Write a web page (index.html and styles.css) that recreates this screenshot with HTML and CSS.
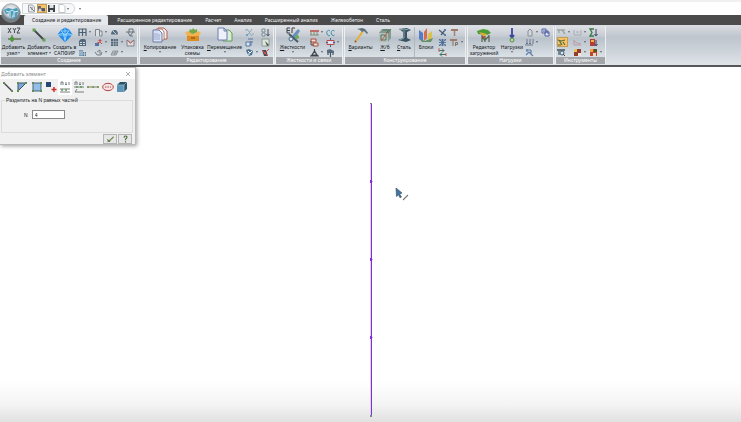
FILE: index.html
```html
<!DOCTYPE html>
<html lang="ru">
<head>
<meta charset="utf-8">
<title>Добавить элемент</title>
<link rel="stylesheet" href="styles.css">
</head>
<body>
<header class="titlebar">
  <button class="orb" aria-label="Меню приложения">
    <svg viewBox="0 0 20 20"><defs><radialGradient id="orb" cx=".5" cy=".35"><stop offset="0" stop-color="#fff"/><stop offset=".7" stop-color="#c3cbd1"/><stop offset="1" stop-color="#747c84"/></radialGradient></defs><circle cx="10" cy="10" r="9.3" fill="url(#orb)" stroke="#888f96" stroke-width=".7"/><path d="M3 7l4-2 5 1 4-1 2 3-2 3v3l-3 2-1-5-2 5-2-1V10l-3 1z" fill="#4b9dbb"/><path d="M5 8l3 1 3-2 3 2 3-1M9 9v6M13 9v5" stroke="#d9f0f6" fill="none"/></svg>
  </button>
  <nav class="quick" aria-label="Быстрый доступ">
    <button aria-label="Просмотр"><svg viewBox="0 0 9 9"><path d="M1.500 1h4l2 2v5h-6z" fill="#e8eaec" stroke="#8b9299" stroke-width=".8"/><path d="M3 3l4 4M5 3v3" stroke="#78828b"/></svg></button>
    <button class="is-on" aria-label="Открыть"><svg viewBox="0 0 9 9"><path d="M1 2h3v2h4v3H1z" fill="#6d6675"/><circle cx="3" cy="6" r="1.500" fill="#d9d4dc"/><circle cx="6.500" cy="6" r="1.500" fill="#514e66"/></svg></button>
    <button aria-label="Сохранить"><svg viewBox="0 0 9 9"><path d="M1 1h7v7H1z" fill="#3d4247"/><path d="M2.500 1h4v3h-4zM3 6h3v2H3z" fill="#dfe3e6"/></svg></button>
    <button class="has-menu" aria-label="Создать"><svg viewBox="0 0 9 9"><path d="M2 .5h4l2 2v6H2z" fill="#fff" stroke="#a9afb5" stroke-width=".7"/></svg></button>
  </nav>
  <button class="customize has-menu" aria-label="Настроить панель"></button>
</header>

<nav class="tabs">
  <a class="tab is-active" href="#">Создание и редактирование</a>
  <a class="tab" href="#">Расширенное редактирование</a>
  <a class="tab" href="#">Расчет</a>
  <a class="tab" href="#">Анализ</a>
  <a class="tab" href="#">Расширенный анализ</a>
  <a class="tab" href="#">Железобетон</a>
  <a class="tab" href="#">Сталь</a>
</nav>

<div class="ribbon">
  <section class="group group-create">
    <div class="tools">
      <button class="big"><svg viewBox="0 0 16 16"><path d="M2 1l3 5M5 1L2 6M7 1l1.500 2.500L10 1M8.500 3.500V6M11 1h3l-3 5h3" stroke="#343a40" stroke-width=".9" fill="none"/><path d="M2 12h13M6 8v7" stroke="#6b745e" stroke-width="1.300"/><circle cx="6" cy="12" r="2.200" fill="#4a9b34"/></svg><span>Добавить<br><span class="menu-text">узел</span></span></button>
      <button class="big"><svg viewBox="0 0 16 16"><path d="M3 3l10 10" stroke="#3f4648" stroke-width="1.800"/><path d="M1.500 1.500h3v3h-3zM11.500 11.500h3v3h-3z" fill="#64a253"/></svg><span>Добавить<br><span class="menu-text">элемент</span></span></button>
      <button class="big"><svg viewBox="0 0 16 16"><path d="M8 .5l4 2 3.500 5L8 15.500.5 7.500 4 3z" fill="#2389e6"/><path d="M4 4h8M1 8h14M8 1v14M4 4l4 4 4-4M1 8l5-2 2 7 2-7 5 2" stroke="#9cdbff" stroke-width=".8" fill="none"/></svg><span>Создать в<br>САПФИР</span></button>
      <div class="smalls">
        <button class="has-menu" aria-label="Рама"><svg viewBox="0 0 9 9"><path d="M1 8V1h7v7M1 4.500h7M4.500 1v7" stroke="#4c6073" fill="none" stroke-width="1.200"/></svg></button>
        <button class="has-menu" aria-label="Стена"><svg viewBox="0 0 9 9"><path d="M1.500 8V1.500h4V8M6 3h2v5H6" stroke="#7c868e" fill="#dce0e4"/></svg></button>
        <button aria-label="Купол"><svg viewBox="0 0 9 9"><path d="M1 7C1 3 3 2 5 2s3 2 3 5z" fill="#586c7b"/><path d="M1 7h7M3 3l3 3" stroke="#bed0db"/></svg></button>
        <button aria-label="Ферма"><svg viewBox="0 0 9 9"><path d="M0 4h9M3 4V1h4v3M2 4l2 4 3-4M4 8h3" stroke="#69727a" fill="none"/></svg></button>
        <button aria-label="Пространственная рама"><svg viewBox="0 0 9 9"><path d="M1 3l2-2h4l1 2v5H1z" fill="#53697c"/><path d="M2 4h2v1H2zM5 4h2v1H5zM2 6h2v1H2zM5 6h2v1H5z" fill="#d5e1e8"/></svg></button>
        <button class="has-menu" aria-label="Вращение"><svg viewBox="0 0 9 9"><path d="M1 5h4v3H1z" fill="#5474a8"/><path d="M6 1v3M4.500 2.500h3M3 5l3-1 2 2" stroke="#c74d43" fill="none"/></svg></button>
        <button class="has-menu" aria-label="Плита"><svg viewBox="0 0 9 9"><path d="M1 1h7v7H1z" fill="#556476"/><path d="M1 3.500h7M1 6h7M3.500 1v7M6 1v7" stroke="#aeb9c4" stroke-width=".7"/></svg></button>
        <button aria-label="Оболочка"><svg viewBox="0 0 9 9"><path d="M1 2v6h7V2L4.500 5z" fill="#e5d8da" stroke="#7e858e"/><path d="M1 2l3.500 3L8 2" stroke="#b86461" fill="none"/></svg></button>
        <button aria-label="Здание"><svg viewBox="0 0 9 9"><path d="M1 2h4v6H1zM5 4h3v4H5z" fill="#577a9a"/><path d="M2 1v7M4 2v6M6.500 4v4M1 4h4M1 6h7" stroke="#cbdbe7" stroke-width=".7"/></svg></button>
        <button class="has-menu" aria-label="Поверхность"><svg viewBox="0 0 9 9"><path d="M1 4l2 3h4l1-3M3 4l3-2v4" stroke="#737c84" fill="none"/></svg></button>
        <button class="has-menu" aria-label="Сетка"><svg viewBox="0 0 9 9"><path d="M1 7l2-4h5L6 7zM4 7l2-4M2 5h5" stroke="#78838c" fill="none" stroke-width=".8"/></svg></button>
      </div>
    </div>
    <h2>Создание</h2>
  </section>

  <section class="group group-edit">
    <div class="tools">
      <button class="big has-menu"><svg viewBox="0 0 16 16"><path d="M6 1h6l3 3v8H6z" fill="#eee" stroke="#b35f55"/><path d="M4 2h6l2 3v8H4z" fill="#fff" stroke="#b77d65"/><path d="M1 3h6l3 3v9H1z" fill="#d8e1f3" stroke="#6d7ba9"/><path d="M3 6v7M5 6v7M7 7v6" stroke="#9ba8cc"/></svg><span><u>К</u>опирование</span></button>
      <button class="big"><svg viewBox="0 0 16 16"><path d="M2 8h12v6H2z" fill="#dc8c21"/><path d="M0 6l3-2 5 3 5-3 3 2-3 3H3z" fill="#f3b24c"/><path d="M4 5l1-3 2 1 1-2 2 2 2-1v3L8 7z" fill="#72a848"/><path d="M6 11h4" stroke="#7d4715"/></svg><span>Упаковка<br>схемы</span></button>
      <button class="big has-menu"><svg viewBox="0 0 16 16"><path d="M6 3h6l3 3v8H6z" fill="#dcecd5" stroke="#5f9d55"/><path d="M1 1h6l3 3v9H1z" fill="#eef1fa" stroke="#6b7fac"/><path d="M7 1v3h3" fill="none" stroke="#6b7fac"/></svg><span><u>П</u>еремещение</span></button>
      <div class="smalls">
        <button aria-label="Разрезать"><svg viewBox="0 0 9 9"><path d="M2 1l5 7M7 1L2 8M0 2h2M7 6h2" stroke="#91a7b8"/><path d="M1 6h2v2H1z" fill="#5cacbd"/></svg></button>
        <button aria-label="Порядок"><svg viewBox="0 0 9 9"><path d="M1 1h3v3H1zM1 5h3v3H1z" stroke="#7e8b94" fill="#dfe4e7"/><path d="M7 1v6M5.500 6L7 8l1.500-2" stroke="#465663" fill="none"/></svg></button>
        <button aria-label="Зеркало"><svg viewBox="0 0 9 9"><path d="M1 4h4v4H1z" fill="#dce4f5" stroke="#5478a4"/><path d="M3 1h5M6 3v5M5 4h3" stroke="#5b76a3"/></svg></button>
        <button aria-label="Выделить"><svg viewBox="0 0 9 9"><path d="M1 1h7v7H1z" fill="#dce6db" stroke="#8e9a91"/><path d="M4 3l4 4-2 1z" fill="#47534e"/></svg></button>
        <button class="has-menu" aria-label="Корректировка"><svg viewBox="0 0 9 9"><path d="M1 2l3-1 4 2-1 4-3 1-2-3z" fill="#4b7194"/><path d="M3 3l2 2 2-2M4 5v2" stroke="#fff" fill="none"/></svg></button>
        <button aria-label="Удалить"><svg viewBox="0 0 9 9"><path d="M1 2h4l2 6H3z" fill="#454c58"/><path d="M8 1L3 6M2 3l5 5" stroke="#d54e43"/></svg></button>
      </div>
    </div>
    <h2>Редактирование</h2>
  </section>

  <section class="group group-stiff">
    <div class="tools">
      <button class="big has-menu"><svg viewBox="0 0 16 16"><path d="M5 1H2v5h3M2 3.500h3M7 1v5M7 1h3" stroke="#3c4347" fill="none"/><path d="M13 2L7 9l2 4 6-9z" fill="#6990bc"/><path d="M4 7l9 8" stroke="#455a6b" stroke-width="2"/><circle cx="6" cy="12" r="2" fill="#d5e5f1" stroke="#506b85"/><circle cx="12" cy="10" r="2" fill="#6da955"/></svg><span><u>Ж</u>есткости</span></button>
      <div class="smalls">
        <button class="has-menu" aria-label="Связи"><svg viewBox="0 0 9 9"><path d="M0 3h9" stroke="#b64d40" stroke-width="1.500"/><path d="M1 4v3M4 4v3M7 4v3M0 7h9" stroke="#6d7c5c" stroke-width=".8"/></svg></button>
        <button aria-label="Шарниры"><svg viewBox="0 0 9 9"><path d="M4 3c-2-2-4 1-3 3s2 2 3 1M8.500 3c-2-2-4 1-3 3s2 2 3 1" stroke="#378bac" fill="none"/></svg></button>
        <button aria-label="Упругое основание"><svg viewBox="0 0 9 9"><path d="M1 1h5v3H1zM3 5h5v3H3z" fill="#eaded8" stroke="#b04d39"/><path d="M1 3v4h3" stroke="#59514d" fill="none"/></svg></button>
        <button class="has-menu" aria-label="Вставки"><svg viewBox="0 0 9 9"><path d="M1 2.500h7v4H1z" fill="#dce2ef" stroke="#b94a4a"/><path d="M4.500 0v2M4.500 7v2M0 4.500h2M7 4.500h2" stroke="#416190"/></svg></button>
        <button class="has-menu" aria-label="Опора"><svg viewBox="0 0 9 9"><path d="M4.500 1v2L2 7h5L4.500 3M0 8h9" fill="none" stroke="#3d454c" stroke-width="1.200"/></svg></button>
        <button aria-label="Сваи"><svg viewBox="0 0 9 9"><path d="M1 4V2l3-1 4 2v2H1z" fill="#596c7f"/><path d="M4.500 4v5M2 5v2M7 5v2" stroke="#485866" stroke-width="1.200"/></svg></button>
      </div>
    </div>
    <h2>Жесткости и связи</h2>
  </section>

  <section class="group group-design">
    <div class="tools">
      <button class="big"><svg viewBox="0 0 16 16"><path d="M10 4L3 14" stroke="#e7ae35" stroke-width="2"/><path d="M4 2l5-1 3 1 3 4-1 1-3-3-2 1-2-2z" fill="#5b7180"/><path d="M3 14l-1 1" stroke="#87552a" stroke-width="2"/></svg><span><u>В</u>арианты</span></button>
      <button class="big"><svg viewBox="0 0 16 16"><path d="M2 6l3-4h9v9l-3 4H2z" fill="#829a90"/><path d="M2 6h9v9H2z" fill="#b4bfbb"/><path d="M4 8h5v5H4zM6 3h6l-3 3M11 6l3-4" stroke="#4f785e" fill="none"/><path d="M4 14l7-9" stroke="#bf5b43"/></svg><span><u>Ж</u>/б</span></button>
      <button class="big"><svg viewBox="0 0 16 16"><path d="M3 2l8-1 4 2-4 2v6l4 2-5 2-8-2 5-2V5z" fill="#3a5361"/><path d="M3 2l5 1 5-1M8 4v7l-4 2" stroke="#88a6b2" fill="none"/></svg><span><u>С</u>таль</span></button>
      <button class="big divided"><svg viewBox="0 0 16 16"><path d="M1 3l4 3v9l-4-3z" fill="#537dc8"/><path d="M6 5l3-4v10l-3 3z" fill="#d96c45"/><path d="M10 7l4-3v8l-4 3z" fill="#d8c14e"/><path d="M2 12l5 2 8-3-2 4H4z" fill="#648f69"/></svg><span>Блоки</span></button>
      <div class="smalls tight">
        <button aria-label="Элементы"><svg viewBox="0 0 9 9"><path d="M1 2l6 5M3 7l4-5" stroke="#4d5e76" stroke-width="1.300"/><path d="M6 1h2v2H6zM6 6h2v2H6z" fill="#577db4"/></svg></button>
        <button aria-label="Балка"><svg viewBox="0 0 9 9"><path d="M1 1h7v2H1z" fill="#a27b67"/><path d="M4.500 3v5" stroke="#99877d" stroke-width="1.500"/></svg></button>
        <button aria-label="Группы"><svg viewBox="0 0 9 9"><path d="M1 1l7 7M8 1L1 8M4.500 1v7M1 4.500h7M1 2h7M1 7h7" stroke="#4a6c96" stroke-width=".9"/></svg></button>
        <button class="has-menu" aria-label="Узел балки"><svg viewBox="0 0 9 9"><path d="M0 1h7v2H0z" fill="#a27b67"/><path d="M3 3v5M5.500 8V4.500h2v2h-2" stroke="#82756c" fill="none"/></svg></button>
        <button aria-label="Расстановка"><svg viewBox="0 0 9 9"><path d="M1 2.500h5M4 .5l2 2-2 2M8 6.500H2M4 4.500l-2 2 2 2" stroke="#3e7661" fill="none"/><path d="M1 0v4M8 5v3" stroke="#c9605a"/></svg></button>
      </div>
    </div>
    <h2>Конструирование</h2>
  </section>

  <section class="group group-loads">
    <div class="tools">
      <button class="big"><svg viewBox="0 0 16 16"><path d="M1 4l6-2 5 1 3 3-4 2-9-1z" fill="#4b9c37"/><path d="M3 5l8 2-3 3z" fill="#e2ad32"/><path d="M6 8v7M9 9v6M13 8v7M6 9l3 5M9 13l4-4" stroke="#546650" stroke-width="1.200"/><path d="M7 9h2v2H7z" fill="#cf5138"/></svg><span>Редактор<br>загружений</span></button>
      <button class="big has-menu"><svg viewBox="0 0 16 16"><path d="M8 1v10M6 8l2 3 2-3" stroke="#3b47a2" stroke-width="1.800" fill="none"/><circle cx="8" cy="13" r="2" fill="#b7d7a7" stroke="#579249"/></svg><span>Нагрузки</span></button>
      <div class="smalls">
        <button class="has-menu" aria-label="Собственный вес"><svg viewBox="0 0 9 9"><path d="M3 8V3l2-2 2 2v5z" fill="#d4d8db" stroke="#858e95"/></svg></button>
        <button aria-label="Копировать нагрузки"><svg viewBox="0 0 9 9"><path d="M1 1h4v4H1zM4 4h4v4H4z" fill="#dce3f4" stroke="#5361a2"/><path d="M2 3h5v3" stroke="#5361a2" fill="none"/></svg></button>
        <button class="has-menu" aria-label="Распределённая нагрузка"><svg viewBox="0 0 9 9"><path d="M2 1v5M5 1v5M8 1v5M0 7h8M1 5l1 1 1-1M4 5l1 1 1-1" stroke="#5b6681" fill="none" stroke-width=".8"/></svg></button>
        <i></i>
        <button aria-label="Изменить нагрузки"><svg viewBox="0 0 9 9"><path d="M1 2h5M2 1v3M6 2v4M1 7l3-3 4 4" stroke="#5f7eaa" fill="none" stroke-width="1.200"/></svg></button>
      </div>
    </div>
    <h2>Нагрузки</h2>
  </section>

  <section class="group group-instr">
    <div class="tools">
      <div class="smalls">
        <button class="has-menu" aria-label="Информация"><svg viewBox="0 0 9 9"><path d="M0 2h8M2 2v3M5 2l3 4" stroke="#9ba6a1" stroke-width="1.300"/></svg></button>
        <button class="has-menu" aria-label="Размеры"><svg viewBox="0 0 9 9"><path d="M1 2v5h7V2M3 4h3" stroke="#a7aeb4" fill="none"/></svg></button>
        <button aria-label="Сумма"><svg viewBox="0 0 9 9"><path d="M5 1H1l2 3.500L1 8h4" stroke="#397841" fill="none" stroke-width="1.300"/><path d="M7 1v6M5.500 6L7 8l1.500-2" stroke="#384970" fill="none"/></svg></button>
        <button class="is-on" aria-label="Фильтр"><svg viewBox="0 0 9 9"><path d="M1 2l3 1 4-1M2 2l3 5M6 4l2 3M1 7h3" stroke="#526b3c" fill="none" stroke-width="1.200"/></svg></button>
        <button class="has-menu" aria-label="Эпюра"><svg viewBox="0 0 9 9"><path d="M1 2v5h7M1 3l3 2 4 1" stroke="#b89ba4" fill="none"/></svg></button>
        <button aria-label="Шкала"><svg viewBox="0 0 9 9"><path d="M1 1h5v7H1z" fill="#b24036"/><path d="M2 2h3v2H2z" fill="#f0b248"/><path d="M7 2v5M6 6l1 2 1.500-2" stroke="#3d456b" fill="none"/></svg></button>
        <button aria-label="Поиск"><svg viewBox="0 0 9 9"><path d="M0 1h8v2H0z" fill="#5e737b"/><circle cx="5" cy="5" r="2" fill="#d9e5ed" stroke="#405d76"/><path d="M6 6l2 2M2 3v4" stroke="#33434f"/></svg></button>
        <button class="has-menu" aria-label="Цвета"><svg viewBox="0 0 9 9"><path d="M1 1h7v7H1z" fill="#943d2d"/><path d="M1 1h3v3H1z" fill="#ecc052"/><path d="M5 5h3v3H5z" fill="#f2e4d7"/></svg></button>
        <button class="has-menu" aria-label="Мозаика"><svg viewBox="0 0 9 9"><path d="M1 1h7v7H1z" fill="#ba492a"/><path d="M1 1h3v3H1z" fill="#efa33d"/><path d="M5 1h3v3H5z" fill="#50562a"/><path d="M4 5h3v3H4z" fill="#e9d6c4"/></svg></button>
      </div>
    </div>
    <h2>Инструменты</h2>
  </section>
</div>

<main class="canvas">
  <svg class="column" viewBox="0 0 4 315" role="img" aria-label="Стержень, 4 элемента"><path d="M1.500 1v312" stroke="#e3ccfb"/><path d="M2.500 1v312" stroke="#7a35cc"/><path d="M1 77h2v3H1zM1 155h2v3H1zM1 233h2v3H1z" fill="#8030e0"/><path d="M3 78h1v1H3zM3 156h1v1H3zM3 234h1v1H3z" fill="#c49af0"/><path d="M1 0h2v1H1zM1 312h2v2H1z" fill="#79898c"/></svg>
  <svg class="cursor" viewBox="0 0 14 15" aria-hidden="true"><path d="M1 1l6 5-2.500 1 2 3-1.500.8-1.500-3L1.500 9.500z" fill="#3f75a2" stroke="#3d5168" stroke-width=".7"/><path d="M8 13l5-5" stroke="#72777c" stroke-width="1.100"/></svg>

  <form class="dialog">
    <div class="dialog-title"><span>Добавить элемент</span><button type="button" aria-label="Закрыть"><svg viewBox="0 0 6 6"><path d="M1 1l4 4M5 1L1 5" stroke="#888" stroke-width=".7"/></svg></button></div>
    <div class="modes">
      <button type="button" aria-label="Стержень"><svg viewBox="0 0 12 12"><path d="M2 2l8 8" stroke="#424b50" stroke-width="1.500"/><path d="M1 1h2v2H1zM9 9h2v2H9z" fill="#5e8e50"/></svg></button>
      <button type="button" aria-label="Треугольник"><svg viewBox="0 0 12 12"><path d="M2 2h8l-8 8z" fill="#7da8d4" stroke="#38546d"/><path d="M1 1h2v2H1zM9 1h2v2H9zM1 9h2v2H1z" fill="#5e8e50"/></svg></button>
      <button type="button" aria-label="Прямоугольник"><svg viewBox="0 0 12 12"><path d="M2 2h8v8H2z" fill="#94bee5" stroke="#426681"/><path d="M1 1h2v2H1zM9 1h2v2H9zM1 9h2v2H1zM9 9h2v2H9z" fill="#5e8e50"/></svg></button>
      <button type="button" aria-label="Добавить по узлам"><svg viewBox="0 0 12 12"><path d="M1 1h5v5H1z" fill="#254676"/><path d="M9 6v5M6.500 8.500h5" stroke="#d12f31" stroke-width="1.500"/></svg></button>
      <button type="button" class="is-on" aria-label="Разделить на N частей"><svg viewBox="0 0 12 12"><path d="M2 4V1h2v3M6 2h2M6 3.500h2M10 1v3M1 8h10M1 11h10" stroke="#667170" fill="none" stroke-width=".9"/><path d="M2 9h2M6 9h2" stroke="#5c9e52" stroke-width="1.300"/></svg></button>
      <button type="button" aria-label="Разделить на расстоянии"><svg viewBox="0 0 12 12"><path d="M2 4V1h2v3M6 2h2M6 3.500h2M10 1v3M1 6h10M4 8l-2 3h9" stroke="#667170" fill="none" stroke-width=".9"/><path d="M3 6h2M7 6h2" stroke="#5c9e52" stroke-width="1.300"/></svg></button>
      <button type="button" aria-label="Цепочка"><svg viewBox="0 0 12 12"><path d="M0 6h12" stroke="#748065"/><path d="M0 5h2v2H0zM5 5h2v2H5zM10 5h2v2h-2z" fill="#8a9c65"/></svg></button>
      <button type="button" aria-label="Контур"><svg viewBox="0 0 12 12"><ellipse cx="6" cy="6" rx="5.300" ry="3.700" fill="#f6e4e3" stroke="#b64548"/><path d="M3 6h6" stroke="#a44e50" stroke-dasharray="1.500 1"/></svg></button>
      <button type="button" aria-label="Объемный элемент"><svg viewBox="0 0 12 12"><path d="M1 4l3-3h7v7l-3 3H1z" fill="#29536b"/><path d="M1 4h7v7H1z" fill="#5d95bb"/><path d="M1 4h7v7M8 4l3-3" stroke="#a8c7c5" fill="none" stroke-width=".7"/></svg></button>
    </div>
    <fieldset>
      <legend>Разделить на N равных частей</legend>
      <label for="parts">N</label><input id="parts" type="text" value="4">
    </fieldset>
    <div class="actions">
      <button type="button" aria-label="Применить"><svg viewBox="0 0 9 9"><path d="M1 5l2 2 5-5" stroke="#718c4c" fill="none" stroke-width="1.300"/><path d="M1 7h3" stroke="#555"/></svg></button>
      <button type="button" aria-label="Справка"><svg viewBox="0 0 9 9"><path d="M3 3c0-3 4-2 3 0L4.500 5v1M4.500 7v1.300" stroke="#4f7043" fill="none" stroke-width="1.300"/></svg></button>
    </div>
  </form>
</main>
</body>
</html>
```
FILE: styles.css
```css
* { box-sizing: border-box; }

body {
  margin: 0;
  min-height: 100vh;
  display: flex;
  flex-direction: column;
  font: 5px/6px "Noto Sans", sans-serif;
  color: #16191c;
  background: #fff;
}

button {
  margin: 0;
  padding: 0;
  border: 0;
  background: none;
  font: inherit;
  color: inherit;
}

svg { display: block; }

/* Title bar */
.titlebar {
  position: relative;
  display: flex;
  align-items: center;
  height: 15px;
  padding-left: 22px;
  border-top: 2px solid #f0f0f0;
}

.orb {
  position: absolute;
  z-index: 1;
  left: 1px;
  top: 1px;
}

.orb svg { width: 20px; height: 20px; }

.quick {
  display: flex;
  align-items: center;
  height: 11px;
  padding: 0 2px 0 4px;
  border: 1px solid #d3d6d9;
  border-radius: 0 5px 5px 0;
  background: #f7f8f9;
}

.quick button { display: flex; align-items: center; width: 10px; height: 9px; }
.quick button.has-menu { width: 15px; gap: 1px; }
.quick svg { width: 9px; height: 9px; }

.customize { display: flex; margin-left: 4px; }

.has-menu::after,
.menu-text::after {
  content: "";
  border: 1px solid transparent;
  border-top: 2px solid #60676e;
  border-bottom: 0;
}

.menu-text::after { display: inline-block; margin-left: 1px; vertical-align: 1px; }

.is-on { background: #f6c365; outline: 1px solid #c79a51; outline-offset: -1px; }

/* Tabs */
.tabs {
  display: flex;
  height: 10px;
  padding-left: 24px;
  background: #4b4b4c;
}

.tab {
  padding: 2px 6px 0 7px;
  color: #f2f2f2;
  text-decoration: none;
  white-space: nowrap;
}

.tab.is-active {
  margin-right: 2px;
  padding: 2px 7px 0 8px;
  border-radius: 2px 2px 0 0;
  background: #e6e8eb;
  color: #17191b;
}

/* Ribbon */
.ribbon {
  display: flex;
  gap: 1px;
  height: 42px;
  padding-top: 1px;
  border-bottom: 2px solid #55585a;
  background: linear-gradient(#dadde2, #bfc5cd 30%, #cdd3da 65%, #dfe4e8);
}

.group {
  display: flex;
  flex-direction: column;
  height: 38px;
  border: 1px solid #eceef0;
  border-width: 0 1px;
  background: linear-gradient(#dfe2e6, #c8cdd4 25%, #b9c1ca 32%, #d9e0e5 80%);
}

.group h2 {
  margin: 0;
  height: 7px;
  background: #a2a6ab;
  color: #fff;
  font: 5px/7px "Noto Sans", sans-serif;
  text-align: center;
}

.tools { display: grid; flex: 1; padding-top: 1px; }

.group-create { width: 138px; }
.group-create .tools { grid-template-columns: 25px 26px 25px auto; }
.group-edit { width: 135px; }
.group-edit .tools { grid-template-columns: 40px 25px 39px auto; }
.group-stiff { width: 68px; }
.group-stiff .tools { grid-template-columns: 33px auto; }
.group-design { width: 122px; }
.group-design .tools { grid-template-columns: 31px 18px 20px 23px auto; }
.group-loads { width: 87px; }
.group-loads .tools { grid-template-columns: 32px 24px auto; }
.group-instr { width: 51px; }

.big {
  display: flex;
  flex-direction: column;
  align-items: center;
  white-space: nowrap;
  min-width: 0;
}

.big svg { width: 16px; height: 16px; margin-bottom: 1px; flex: none; }
.big.has-menu::after { margin-top: 1px; }
.big.divided { border-left: 1px solid #b1b8bf; }

.smalls {
  display: grid;
  grid-template-columns: repeat(auto-fill, 16px);
  grid-auto-rows: 10px;
  margin-right: -8px;
  padding-left: 1px;
}

.group-create .smalls { grid-template-columns: repeat(4, 16px); }
.smalls.tight { grid-template-columns: 12px 16px; }

.smalls button { display: flex; align-items: center; gap: 2px; }
.smalls svg { width: 9px; height: 9px; }
.smalls .is-on { width: 11px; }

/* Model view */
.canvas {
  position: relative;
  flex: 1;
  background: linear-gradient(to top, #e1e1e1, #f4f4f4 18px, #fff 40px);
}

.column { position: absolute; left: calc(50% - 2px); top: 36px; width: 4px; height: 315px; }
.cursor { position: absolute; left: 395px; top: 120px; width: 14px; height: 15px; }

/* Floating dialog */
.dialog {
  position: absolute;
  left: 0;
  top: 0;
  width: 136px;
  border: 1px solid #b9b9b9;
  border-left: 0;
  background: #f0f0f0;
  box-shadow: 1px 1px 4px #0006;
  font-family: "Liberation Sans", sans-serif;
}

.dialog-title {
  display: flex;
  align-items: center;
  justify-content: space-between;
  height: 11px;
  padding: 0 4px 0 1px;
  background: #fff;
  color: #8a8a8a;
  font-family: "Noto Sans", sans-serif;
}

.dialog-title svg { width: 6px; height: 6px; }

.modes { display: grid; grid-template-columns: repeat(9, 1fr); padding: 0 6px 0 1px; }
.modes button { display: grid; place-items: center; height: 16px; }
.modes svg { width: 12px; height: 12px; }
.modes .is-on { background: #fff; outline: 0; }

.dialog fieldset {
  display: flex;
  align-items: center;
  gap: 4px;
  height: 36px;
  margin: 2px 2px 1px 1px;
  padding: 0 0 6px 22px;
  border: 1px solid #dcdcdc;
}

.dialog legend { margin-left: -19px; padding: 0 1px; }

.dialog input {
  width: 33px;
  height: 9px;
  padding: 0 2px;
  border: 1px solid #8a8a8a;
  background: #fff;
  font: 5px/7px "Liberation Sans", sans-serif;
  color: #222;
}

.actions { display: flex; justify-content: flex-end; gap: 1px; padding-right: 3px; }

.actions button {
  display: grid;
  place-items: center;
  width: 14px;
  height: 10px;
  border: 1px solid #b4b4b4;
  background: #e6e6e6;
}

.actions svg { width: 9px; height: 8px; }
```
